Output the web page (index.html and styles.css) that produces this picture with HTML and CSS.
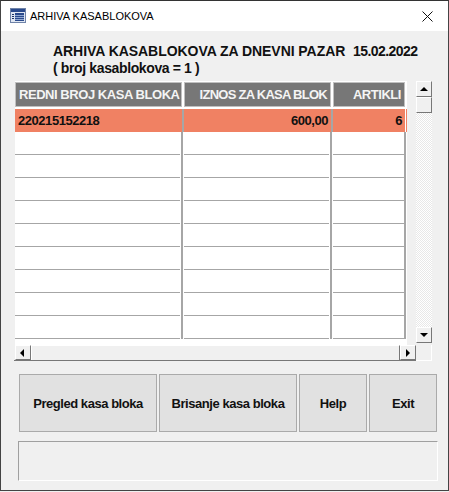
FILE: index.html
```html
<!DOCTYPE html>
<html lang="hr">
<head>
    <meta charset="UTF-8">
    <meta name="viewport" content="width=device-width, initial-scale=1.0">
    <title>ARHIVA KASABLOKOVA</title>
    <link rel="stylesheet" href="styles.css">
</head>
<body>
    <div class="window">
        <div class="titlebar">
            <svg class="app-icon" width="16" height="16" viewBox="0 0 16 16">
                <rect x="0.5" y="0.5" width="15" height="14" fill="#dfe6f2" stroke="#6f83a8"/>
                <rect x="1" y="1" width="14" height="3" fill="#2a4a8c"/>
                <rect x="2" y="6" width="2" height="1" fill="#1d3566"/>
                <rect x="2" y="8" width="2" height="1" fill="#1d3566"/>
                <rect x="2" y="10" width="2" height="1" fill="#1d3566"/>
                <rect x="5" y="5" width="9" height="8" fill="#2a4a8c"/>
                <path d="M5 7.5H14M5 9.5H14M5 11.5H14" stroke="#8fa6d0"/>
            </svg>
            <span class="title-text">ARHIVA KASABLOKOVA</span>
            <svg class="close-icon" width="11" height="11" viewBox="0 0 11 11">
                <path d="M0.5 0.5L10.5 10.5M10.5 0.5L0.5 10.5" stroke="#111" fill="none"/>
            </svg>
        </div>
        <div class="content">
            <div class="heading">
                <div class="heading-line">ARHIVA KASABLOKOVA ZA DNEVNI PAZAR&nbsp;&nbsp;<span class="heading-date">15.02.2022</span></div>
                <div class="heading-line small">( broj kasablokova = 1 )</div>
            </div>
            <div class="grid-area">
                <div class="grid-table">
                    <div class="row head">
                        <div class="cell">REDNI BROJ KASA BLOKA</div>
                        <div class="cell iznos">IZNOS ZA KASA BLOK</div>
                        <div class="cell right">ARTIKLI</div>
                    </div>
                    <div class="row active">
                        <div class="cell">220215152218</div>
                        <div class="cell right">600,00</div>
                        <div class="cell right">6</div>
                    </div>
                    <div class="row"><div class="cell"></div><div class="cell"></div><div class="cell"></div></div>
                    <div class="row"><div class="cell"></div><div class="cell"></div><div class="cell"></div></div>
                    <div class="row"><div class="cell"></div><div class="cell"></div><div class="cell"></div></div>
                    <div class="row"><div class="cell"></div><div class="cell"></div><div class="cell"></div></div>
                    <div class="row"><div class="cell"></div><div class="cell"></div><div class="cell"></div></div>
                    <div class="row"><div class="cell"></div><div class="cell"></div><div class="cell"></div></div>
                    <div class="row"><div class="cell"></div><div class="cell"></div><div class="cell"></div></div>
                    <div class="row"><div class="cell"></div><div class="cell"></div><div class="cell"></div></div>
                    <div class="row"><div class="cell"></div><div class="cell"></div><div class="cell"></div></div>
                </div>
                <div class="vbar">
                    <div class="sb-btn"><span class="arrow up"></span></div>
                    <div class="sb-btn"></div>
                    <div class="sb-track"></div>
                    <div class="sb-btn"><span class="arrow down"></span></div>
                </div>
                <div class="hbar">
                    <div class="sb-btn"><span class="arrow left"></span></div>
                    <div class="hbar-thumb"></div>
                    <div class="sb-btn"><span class="arrow right"></span></div>
                </div>
                <div class="corner"></div>
            </div>
            <div class="buttons">
                <div class="btn">Pregled kasa bloka</div>
                <div class="btn">Brisanje kasa bloka</div>
                <div class="btn">Help</div>
                <div class="btn">Exit</div>
            </div>
            <div class="statusbar"></div>
        </div>
    </div>
</body>
</html>
```

FILE: styles.css
```css
html, body {
    margin: 0;
    padding: 0;
    background-color: #f0f0f0;
}
body {
    width: 449px;
    height: 492px;
    overflow: hidden;
    font-family: "Liberation Sans", Arial, sans-serif;
    color: #000;
}
.window {
    box-sizing: border-box;
    width: 449px;
    height: 491px;
    border: 1px solid #444;
    border-top-color: #333;
    background-color: #f0f0f0;
    display: flex;
    flex-direction: column;
}
.titlebar {
    height: 30px;
    background-color: #fff;
    display: flex;
    align-items: center;
    padding: 0 15px 0 9px;
    flex-shrink: 0;
}
.app-icon {
    margin-right: 4px;
}
.title-text {
    font-size: 11px;
    flex: 1;
}
.content {
    flex: 1;
    padding: 0 10px 0 13px;
    display: flex;
    flex-direction: column;
}
.heading {
    padding: 12px 0 0 39px;
    height: 38px;
    font-size: 14px;
    line-height: 17px;
    font-weight: bold;
    color: #111;
    letter-spacing: -0.05px;
    white-space: nowrap;
}
.heading-date {
    letter-spacing: -0.56px;
}
.heading-line.small {
    letter-spacing: -0.37px;
}
.grid-area {
    display: grid;
    grid-template-columns: 393px 9px 16px;
    grid-template-rows: 264px 16px;
}
.grid-table {
    grid-column: 1;
    grid-row: 1;
    background-color: #fff;
    border-left: 1px solid #f0f0f0;
    overflow: hidden;
}
.row {
    display: grid;
    grid-template-columns: 169px 149px 73px;
    height: 23px;
    box-sizing: border-box;
}
.cell {
    box-sizing: border-box;
    border-right: 2px solid #a6a6a6;
    margin-right: 1px;
    padding: 1px 3px 0;
    font-size: 13px;
    letter-spacing: -0.45px;
    font-weight: bold;
    line-height: 22px;
    white-space: nowrap;
    overflow: hidden;
    background: linear-gradient(#a6a6a6, #a6a6a6) left bottom / calc(100% - 1px) 1px no-repeat;
}
.cell:last-child {
    margin-right: 0;
    background-size: 100% 1px;
}
.right {
    text-align: right;
}
.row.head {
    height: 28px;
    padding: 1px 0 2px;
    background-color: #fff;
}
.head .cell {
    background: #777;
    color: #f4f4f4;
    border: 1px solid #c0c0c0;
    margin-right: 2px;
    text-align: center;
}
.head .cell.iznos {
    text-align: right;
    letter-spacing: -0.73px;
}
.head .cell.right {
    text-align: right;
    margin-right: 1px;
    padding-right: 3px;
}
.row.active {
    background-color: #f08163;
    height: 23px;
}
.active .cell {
    background: none;
    margin-right: 0;
    border-right-color: #a6a6a6;
    color: #111;
}
.active .cell:last-child {
    border-right: 1px solid #fff;
}
.vbar {
    grid-column: 3;
    grid-row: 1;
    display: flex;
    flex-direction: column;
    margin-bottom: 2px;
}
.sb-btn {
    box-sizing: border-box;
    width: 16px;
    height: 16px;
    flex-shrink: 0;
    background-color: #f0f0f0;
    border: 1px solid;
    border-color: #fff #777 #777 #fff;
    display: flex;
    align-items: center;
    justify-content: center;
}
.sb-track {
    flex: 1;
    background-color: #f6f6f6;
    background-image: repeating-conic-gradient(#e8e8e8 0 25%, #fff 0 50%);
    background-size: 2px 2px;
}
.arrow {
    width: 0;
    height: 0;
    border: 4px solid transparent;
}
.arrow.up {
    border-top: 0;
    border-bottom-color: #000;
}
.arrow.down {
    border-bottom: 0;
    border-top-color: #000;
}
.arrow.left {
    border-left: 0;
    border-right-color: #000;
    margin-right: 3px;
}
.arrow.right {
    border-right: 0;
    border-left-color: #000;
}
.hbar {
    grid-column: 1 / span 2;
    grid-row: 2;
    display: flex;
    padding-left: 1px;
    border-bottom: 1px solid #777;
    box-sizing: border-box;
    height: 16px;
}
.hbar .sb-btn {
    height: 15px;
}
.hbar-thumb {
    flex: 1;
    background-color: #f0f0f0;
    border: 1px solid;
    border-color: #fff #777 #777 #fff;
    border-bottom: 0;
}
.corner {
    grid-column: 3;
    grid-row: 2;
    box-sizing: border-box;
    border-right: 1px solid #fff;
    border-bottom: 1px solid #fff;
}
.buttons {
    display: flex;
    gap: 2px;
    margin: 13px 0 0 5px;
}
.btn {
    box-sizing: border-box;
    height: 58px;
    width: 138px;
    background-color: #e1e1e1;
    border: 1px solid #aaa;
    display: flex;
    align-items: center;
    justify-content: center;
    font-size: 13px;
    letter-spacing: -0.45px;
    font-weight: bold;
    color: #111;
}
.btn:nth-child(n+3) {
    width: 68px;
}
.statusbar {
    box-sizing: border-box;
    margin: 9px 0 0 4px;
    width: 420px;
    height: 40px;
    border: 1px solid;
    border-color: #a0a0a0 #fff #fff #a0a0a0;
}
```
